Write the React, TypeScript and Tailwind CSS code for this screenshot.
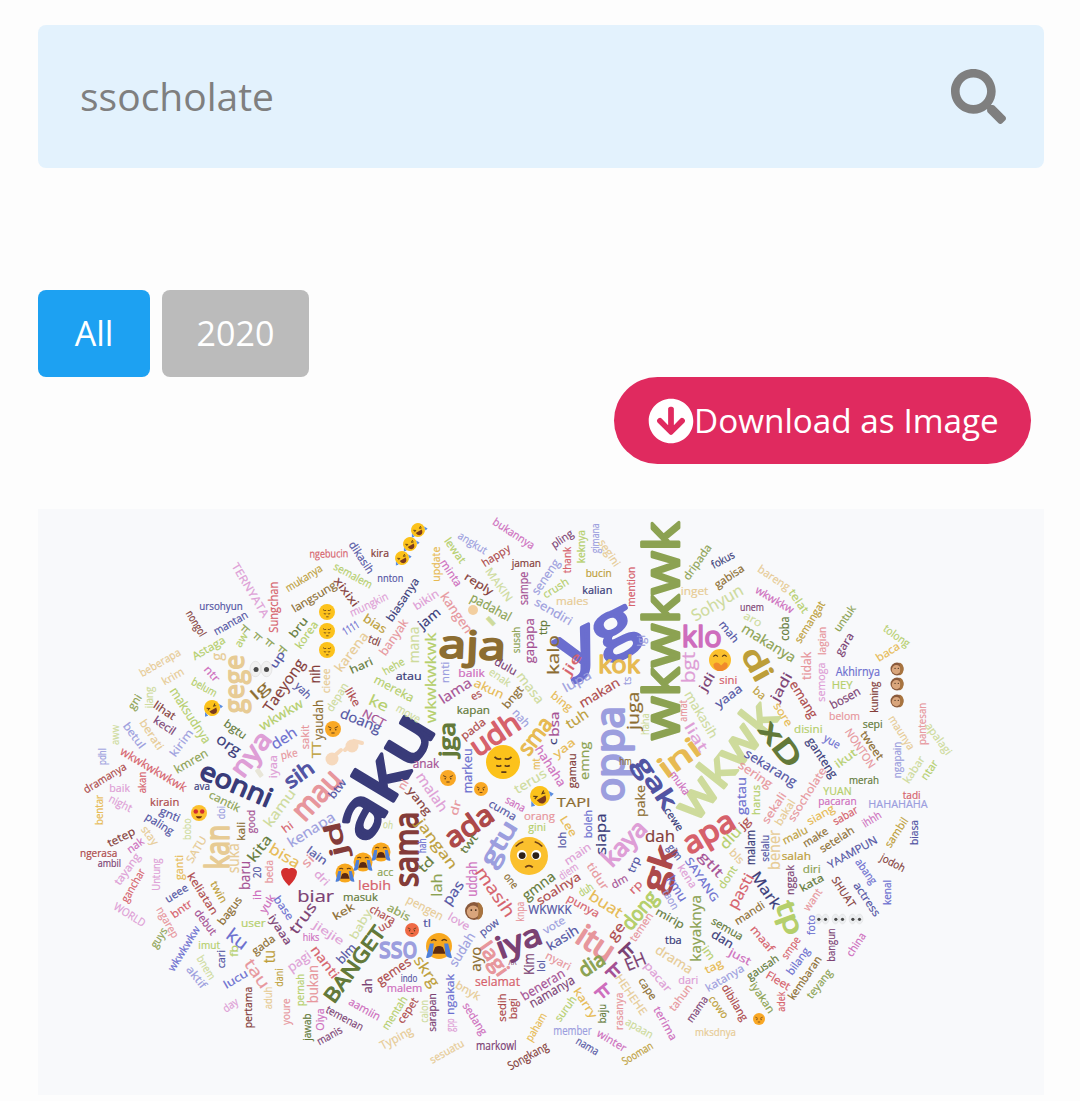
import { FaArrowCircleDown, FaSearch } from "react-icons/fa";

// d3 category20b, the palette the word cloud is drawn with
const PALETTE = [
  "#393b79", "#5254a3", "#6b6ecf", "#9c9ede", "#637939", "#8ca252", "#b5cf6b", "#cedb9c", "#8c6d31", "#bd9e39",
  "#e7ba52", "#e7cb94", "#843c39", "#ad494a", "#d6616b", "#e7969c", "#7b4173", "#a55194", "#ce6dbd", "#de9ed6",
];

// text, start x/y, end x/y, palette index, font size
type Row = [string, number, number, number, number, number, number?];

const tile = (ox: number, oy: number, rows: Row[], k = 3) =>
  rows.map(([t, x0, y0, x1, y1, c, s]) => ({
    t,
    x0: ox + x0 / k,
    y0: oy + y0 / k,
    x1: ox + x1 / k,
    y1: oy + y1 / k,
    c: PALETTE[c],
    s: s ?? 11,
  }));

const WORDS = [
  // big words and the ones that cross tiles
  ...tile(0, 0, [
    ["aku", 346, 832, 416, 716, 0, 64], ["yg", 557, 650, 630, 613, 2, 60], ["wkwkwk", 660, 740, 660, 522, 5, 50],
    ["wkwk", 682, 812, 766, 706, 7, 46], ["oppa", 608, 802, 608, 706, 3, 40], ["aja", 439, 642, 506, 645, 8, 38],
    ["gak", 641, 758, 672, 806, 1, 24], ["gk", 650, 890, 665, 846, 13, 32], ["dah", 645, 836, 675, 836, 12, 16],
    ["sama", 405, 887, 405, 812, 12, 32], ["ada", 446, 840, 490, 810, 13, 28], ["mau", 296, 815, 335, 773, 15, 30],
    ["kamu", 266, 825, 292, 790, 7, 14], ["BANGET", 328, 1000, 380, 928, 4, 20], ["aamiin", 350, 1000, 380, 1017, 18],
    ["temenan", 327, 1008, 363, 1027, 16], ["baby", 352, 938, 368, 910, 7], ["masuk", 343, 896, 378, 896, 4],
    ["lebih", 358, 885, 391, 885, 14, 13], ["doang", 341, 712, 381, 728, 1, 14], ["karena", 337, 670, 365, 633, 11, 13],
    ["hari", 350, 670, 372, 660, 4], ["dikasih", 352, 542, 372, 572, 1], ["semalem", 335, 565, 372, 585, 6],
    ["mungkin", 350, 613, 387, 595, 19], ["xixixi", 337, 578, 357, 605, 12], ["1111", 343, 632, 358, 623, 2],
    ["bru", 291, 636, 305, 618, 4], ["korea", 297, 647, 315, 622, 6], ["sekali", 764, 822, 783, 793, 15],
    ["bakal", 777, 824, 792, 800, 11], ["ssocholate", 790, 820, 823, 768, 15], ["gatau", 741, 815, 741, 777, 2, 13],
    ["harus", 755, 815, 755, 785, 6], ["bentar", 98, 825, 98, 795, 10], ["pake", 640, 817, 640, 785, 8, 12],
    ["cuma", 490, 802, 516, 817, 1], ["yang", 410, 788, 430, 813, 12], ["jangan", 420, 820, 455, 867, 9, 14],
    ["mirip", 657, 910, 684, 925, 4], ["drama", 657, 948, 692, 970, 11, 13], ["terima", 657, 1007, 675, 1039, 18],
    ["pacar", 647, 963, 670, 990, 19], ["apa", 684, 845, 732, 817, 14, 30], ["dr", 453, 815, 457, 800, 15],
    ["jga", 446, 757, 446, 722, 4, 22],
  ], 1),
  ...tile(60, 510, [
    ["ngebucin", 748, 130, 865, 128, 14], ["TERNYATA", 525, 160, 620, 318, 19], ["mukanya", 678, 235, 783, 170, 9],
    ["langsung", 697, 297, 825, 220, 8], ["Sungchan", 640, 368, 640, 215, 14, 13], ["ursohyun", 418, 285, 548, 285, 1],
    ["mantan", 462, 365, 560, 310, 1], ["nongol", 388, 303, 432, 375, 12], ["ㅠ", 545, 345, 568, 365, 5, 13],
    ["ㅠ", 583, 368, 606, 388, 5, 13], ["ㅠ", 618, 387, 642, 407, 5, 13], ["ㅠ", 656, 408, 680, 428, 5, 13],
    ["aw", 530, 408, 553, 370, 6], ["up", 635, 470, 665, 425, 1], ["Astaga", 398, 440, 492, 385, 6],
    ["beberapa", 240, 490, 358, 422, 11], ["krim", 307, 515, 368, 480, 11], ["gege", 520, 610, 520, 435, 11, 28],
    ["g", 468, 452, 468, 428, 11, 15], ["ntr", 440, 470, 475, 510, 18], ["belum", 398, 510, 470, 550, 6],
    ["lg", 575, 560, 620, 520, 8, 15], ["Taeyong", 618, 600, 722, 450, 12, 15], ["yah", 712, 520, 750, 560, 1],
    ["nih", 762, 520, 762, 465, 12, 14], ["cieee", 795, 550, 795, 475, 11], ["yaudah", 775, 690, 775, 570, 8, 12],
    ["TT", 768, 745, 768, 695, 9, 13], ["depan", 805, 600, 855, 520, 7], ["like", 865, 535, 895, 585, 13],
    ["wkwkw", 600, 650, 725, 575, 6, 13], ["deh", 635, 705, 705, 660, 2, 15], ["sakit", 733, 718, 733, 645, 15],
    ["pke", 662, 735, 712, 725, 15], ["iyaa", 637, 805, 637, 735, 19], ["nya", 525, 790, 615, 670, 19, 26],
    ["bgtu", 497, 635, 558, 678, 4], ["org", 475, 680, 540, 725, 0, 15], ["kmren", 345, 780, 440, 725, 5, 12],
    ["eonni", 425, 775, 635, 865, 0, 26], ["sih", 677, 820, 755, 765, 1, 20], ["btw", 810, 860, 850, 810, 1],
    ["maksudnya", 340, 535, 445, 695, 6, 13], ["lihat", 285, 580, 345, 620, 12], ["kecil", 285, 625, 345, 665, 16],
    ["gni", 210, 595, 235, 555, 5], ["ilang", 265, 595, 265, 530, 7], ["berati", 248, 630, 305, 715, 11],
    ["kirim", 335, 735, 390, 660, 3], ["betul", 198, 640, 250, 710, 3], ["aww", 163, 705, 163, 645, 7],
    ["pdhl", 125, 765, 125, 715, 3], ["wkwkwkwkwk", 185, 720, 378, 835, 14, 12], ["dramanya", 72, 840, 195, 765, 13],
    ["baik", 148, 832, 210, 832, 19], ["akan", 245, 850, 245, 785, 14], ["ava", 402, 825, 450, 825, 0],
    ["cantik", 450, 850, 540, 895, 5], ["kirain", 270, 875, 358, 875, 13], ["night", 150, 862, 215, 895, 19],
  ]),
  ...tile(60, 800, [
    ["gnti", 302, 28, 360, 55, 1], ["paling", 260, 45, 340, 95, 1], ["stay", 252, 80, 290, 130, 11],
    ["tetep", 143, 130, 222, 90, 12], ["nak", 203, 150, 247, 118, 18], ["bobo", 380, 120, 380, 55, 7],
    ["SATU", 385, 185, 430, 110, 11], ["kan", 470, 208, 470, 75, 11, 32], ["doi", 480, 58, 480, 18, 3],
    ["kali", 540, 122, 540, 65, 8], ["suka", 520, 220, 520, 130, 11, 16], ["good", 572, 100, 572, 30, 17],
    ["ngerasa", 60, 157, 172, 157, 13], ["ambil", 113, 187, 183, 187, 16], ["tayang", 168, 250, 232, 162, 19],
    ["ganchar", 190, 303, 245, 207, 14], ["Untung", 287, 272, 287, 175, 19], ["ganti", 355, 240, 355, 165, 10],
    ["keliatan", 392, 220, 468, 340, 13], ["twin", 462, 245, 495, 305, 9], ["ueee", 317, 298, 380, 258, 1],
    ["bntr", 335, 345, 392, 305, 14], ["ngarep", 300, 322, 350, 410, 15], ["WORLD", 165, 315, 255, 370, 19],
    ["guys", 277, 440, 312, 385, 5], ["debut", 412, 330, 465, 400, 17], ["bagus", 478, 370, 537, 292, 8],
    ["baru", 552, 270, 552, 183, 17, 15], ["kita", 570, 180, 625, 108, 4, 14], ["20", 590, 235, 590, 200, 1],
    ["beda", 625, 250, 625, 180, 15], ["bisa", 632, 140, 718, 190, 10, 15], ["hi", 668, 90, 695, 70, 14],
    ["kenapa", 685, 130, 820, 45, 3, 14], ["jd", 834, 168, 810, 69, 12, 22], ["lain", 745, 145, 800, 185, 1],
    ["si", 730, 195, 755, 170, 15, 13], ["dri", 770, 215, 805, 250, 19], ["biar", 712, 285, 822, 285, 16, 17],
    ["trus", 695, 395, 758, 310, 16, 15], ["base", 650, 290, 695, 355, 2], ["yuk", 605, 335, 635, 285, 18],
    ["ih", 590, 300, 590, 270, 18], ["iyaaa", 635, 345, 690, 430, 16], ["kek", 820, 350, 880, 315, 8],
    ["hiks", 728, 410, 778, 410, 18], ["jiejie", 765, 370, 850, 425, 19], ["blm", 835, 485, 880, 435, 1, 12],
    ["nanti", 762, 440, 830, 530, 14, 13], ["user", 543, 367, 617, 367, 6], ["ku", 507, 395, 560, 435, 2, 18],
    ["gada", 578, 455, 640, 410, 8], ["tu", 628, 490, 628, 450, 9, 16], ["imut", 415, 432, 480, 432, 6],
    ["fb", 520, 470, 520, 435, 6], ["cari", 480, 505, 480, 450, 1], ["bnem", 420, 468, 460, 535, 7],
    ["wkwkwkw", 330, 510, 410, 380, 2], ["lucu", 492, 555, 560, 515, 2], ["aktif", 388, 500, 435, 560, 3],
    ["tau", 565, 480, 620, 560, 15, 16], ["dani", 655, 560, 655, 505, 9], ["pagi", 685, 505, 748, 460, 19, 13],
    ["bukan", 758, 610, 758, 495, 15, 14], ["pernah", 718, 618, 718, 522, 6], ["day", 490, 628, 530, 600, 19],
    ["aduh", 622, 628, 622, 560, 11], ["pertama", 563, 685, 563, 560, 12], ["youre", 677, 675, 677, 595, 15],
    ["jawab", 738, 722, 738, 640, 4], ["Oiya", 778, 692, 778, 625, 18], ["manis", 772, 725, 843, 685, 16],
  ]),
  ...tile(360, 510, [
    ["kira", 32, 128, 87, 128, 12], ["biasanya", 85, 330, 168, 205, 0], ["nnton", 52, 202, 130, 202, 1],
    ["update", 225, 215, 225, 110, 10], ["lewat", 262, 85, 312, 155, 6], ["angkut", 298, 72, 380, 122, 3],
    ["bukannya", 403, 30, 522, 108, 18], ["pling", 575, 105, 635, 65, 16], ["gimana", 702, 130, 702, 40, 3],
    ["keknya", 660, 160, 660, 60, 6], ["thank", 620, 190, 620, 110, 14], ["happy", 367, 160, 447, 110, 13],
    ["jaman", 455, 158, 543, 158, 12], ["segini", 725, 90, 775, 165, 11], ["minta", 250, 150, 300, 225, 18],
    ["MAKIN", 385, 175, 452, 270, 7], ["reply", 318, 195, 398, 245, 12], ["bikin", 162, 290, 232, 245, 19],
    ["sampe", 490, 285, 490, 185, 17, 12], ["seneng", 522, 250, 590, 150, 3, 12], ["crush", 550, 255, 622, 210, 6],
    ["bucin", 677, 187, 755, 187, 9], ["mention", 812, 290, 812, 170, 14], ["kalian", 667, 238, 757, 238, 0],
    ["padahal", 335, 258, 452, 322, 5, 13], ["sendiri", 527, 272, 635, 335, 3, 12], ["males", 588, 272, 685, 272, 11],
    ["kangen", 252, 250, 330, 365, 15, 13], ["jam", 178, 348, 235, 300, 0, 13], ["bias", 14, 320, 78, 360, 9, 12],
    ["banyak", 65, 432, 135, 330, 15, 12], ["tdi", 27, 383, 62, 397, 12], ["mana", 158, 460, 158, 350, 7, 15],
    ["wkwkwkwk", 210, 640, 210, 368, 6, 14], ["I", 378, 345, 405, 320, 7, 14], ["susah", 465, 430, 465, 350, 5],
    ["gapapa", 508, 460, 508, 325, 17, 13], ["ttp", 547, 375, 547, 330, 4], ["kalo", 578, 495, 578, 375, 8, 16],
    ["jie", 615, 490, 655, 430, 14, 13], ["lgi", 840, 410, 840, 375, 3], ["kok", 715, 460, 840, 460, 10, 24],
    ["lupa", 610, 535, 690, 490, 3, 13], ["ts", 800, 525, 800, 500, 3], ["dulu", 407, 450, 470, 485, 16],
    ["nnti", 252, 520, 252, 455, 3], ["balik", 295, 488, 375, 488, 18], ["enak", 392, 480, 450, 520, 7],
    ["akun", 345, 515, 430, 555, 10, 12], ["lama", 240, 570, 330, 512, 17, 14], ["es", 333, 560, 362, 545, 13],
    ["bngt", 432, 590, 482, 530, 8], ["masa", 480, 490, 545, 575, 7, 13], ["ke", 30, 565, 85, 590, 6, 15],
    ["atau", 107, 495, 185, 495, 0], ["hehe", 70, 485, 130, 450, 6], ["mereka", 45, 505, 160, 565, 6, 12],
    ["kapan", 290, 598, 390, 598, 4], ["bing", 578, 550, 635, 595, 10], ["makan", 660, 582, 775, 512, 13, 13],
    ["juga", 820, 660, 820, 545, 8, 16], ["tuh", 620, 645, 680, 605, 9, 14], ["haha", 852, 675, 852, 610, 7],
    ["move", 112, 590, 180, 628, 7], ["NCT", 10, 605, 75, 640, 17], ["pada", 305, 680, 372, 630, 13],
    ["udh", 335, 715, 470, 625, 14, 28], ["nah", 465, 600, 505, 645, 3], ["sma", 485, 725, 560, 625, 10, 22],
    ["bsa", 582, 680, 582, 605, 17, 12], ["c", 578, 705, 578, 685, 0], ["yaa", 582, 735, 640, 690, 10],
    ["emng", 672, 810, 672, 695, 5, 13], ["gamau", 635, 835, 635, 730, 12], ["hm", 778, 752, 815, 752, 8],
    ["hahaha", 535, 710, 610, 825, 18, 12], ["mt", 525, 780, 525, 745, 10], ["terus", 465, 840, 555, 785, 7, 13],
    ["anak", 158, 760, 238, 760, 17, 12], ["markeu", 320, 850, 320, 715, 2, 13], ["malah", 180, 790, 255, 900, 19, 14],
    ["ni", 120, 835, 135, 810, 15], ["sana", 440, 865, 495, 895, 18], ["TAPI", 590, 878, 692, 878, 8, 12],
  ]),
  ...tile(360, 800, [
    ["oh", 70, 70, 100, 75, 7], ["hah", 185, 160, 185, 115, 2], ["twt", 305, 155, 345, 105, 4],
    ["td", 180, 210, 215, 175, 4, 13], ["lah", 228, 290, 228, 220, 5, 15], ["gtu", 375, 190, 450, 65, 3, 24],
    ["orang", 492, 45, 585, 45, 15], ["gini", 505, 78, 558, 78, 6], ["Lee", 610, 50, 645, 105, 10],
    ["loh", 605, 145, 605, 95, 1], ["boleh", 682, 115, 682, 30, 2], ["siapa", 722, 165, 722, 40, 0, 14],
    ["pas", 255, 310, 300, 245, 1, 14], ["uddah", 335, 290, 335, 185, 18, 14], ["masih", 360, 205, 455, 345, 14, 17],
    ["one", 440, 222, 470, 260, 8], ["gmna", 490, 290, 580, 222, 4, 14], ["main", 615, 185, 688, 135, 19],
    ["diem", 598, 230, 650, 195, 19], ["soalnya", 532, 305, 658, 225, 13, 12], ["tidur", 690, 190, 740, 265, 15],
    ["trp", 810, 215, 830, 170, 1], ["kaya", 735, 185, 845, 70, 19, 24], ["dm", 755, 255, 800, 230, 17],
    ["rp", 810, 275, 840, 245, 14], ["duh", 657, 280, 695, 255, 6], ["punya", 625, 290, 717, 342, 14],
    ["buat", 692, 280, 785, 340, 10, 15], ["dong", 795, 380, 880, 280, 6, 20], ["WKWKK", 505, 328, 635, 328, 1, 12],
    ["knpa", 478, 365, 478, 305, 15], ["pengen", 143, 295, 248, 350, 11, 12], ["chara", 33, 322, 105, 362, 13],
    ["abis", 85, 318, 150, 352, 5], ["acc", 52, 215, 100, 215, 5], ["uu", 55, 385, 90, 365, 13],
    ["tl", 190, 368, 213, 368, 1], ["love", 268, 345, 328, 380, 19], ["pow", 360, 400, 412, 360, 1],
    ["vote", 550, 392, 612, 355, 3], ["kasih", 562, 440, 652, 385, 1, 13], ["iya", 410, 445, 540, 395, 16, 30],
    ["lagi", 372, 430, 435, 520, 15, 20], ["itu", 660, 395, 760, 460, 15, 30], ["ge", 750, 415, 785, 370, 13, 14],
    ["temen", 815, 420, 870, 340, 15], ["dia", 660, 515, 728, 470, 5, 20], ["ㅠ", 778, 465, 815, 430, 16, 22],
    ["ㅠ", 738, 525, 775, 490, 17, 22], ["ㅠ", 705, 585, 745, 552, 18, 22], ["EH", 795, 495, 855, 470, 16, 18],
    ["HEHEHE", 775, 525, 855, 640, 11], ["cape", 845, 535, 885, 595, 8], ["ayo", 345, 515, 345, 440, 8, 14],
    ["sudah", 275, 495, 335, 400, 3, 13], ["sso", 57, 440, 172, 440, 3, 30], ["skrg", 175, 470, 230, 555, 9, 15],
    ["gemes", 52, 545, 148, 480, 13, 13], ["indo", 122, 533, 172, 533, 1], ["malem", 80, 562, 187, 562, 18],
    ["ah", 20, 580, 20, 535, 16, 13], ["bnyk", 290, 550, 360, 590, 11], ["selamat", 345, 545, 480, 545, 14, 12],
    ["Kim", 505, 525, 505, 460, 16, 14], ["lol", 542, 515, 542, 480, 1], ["^^", 445, 490, 470, 490, 16],
    ["nyari", 560, 462, 632, 500, 15], ["beneran", 485, 590, 610, 515, 17, 13], ["namanya", 510, 612, 640, 535, 16, 13],
    ["karry", 650, 565, 705, 650, 10], ["suruh", 590, 660, 640, 590, 6], ["baju", 725, 670, 725, 612, 4],
    ["rasanya", 775, 690, 775, 578, 15], ["apaan", 800, 660, 878, 705, 7], ["sedih", 425, 665, 425, 580, 13],
    ["bagi", 458, 658, 458, 595, 13], ["sarapan", 215, 695, 215, 580, 16], ["gpp", 268, 695, 268, 655, 19],
    ["ngakak", 268, 645, 268, 522, 2], ["calon", 190, 668, 190, 600, 7], ["cepet", 118, 665, 165, 595, 13],
    ["mentah", 72, 685, 132, 590, 6], ["sedang", 318, 610, 375, 700, 18], ["Typing", 62, 738, 155, 688, 11, 12],
    ["paham", 503, 720, 550, 640, 10], ["member", 580, 692, 695, 692, 3, 12], ["markowl", 348, 737, 470, 737, 16, 12],
    ["sesuatu", 210, 780, 308, 725, 11], ["Songkang", 445, 800, 562, 735, 12, 12], ["nama", 652, 718, 715, 755, 1],
    ["winter", 715, 695, 798, 745, 18], ["Sooman", 787, 785, 875, 732, 9],
  ]),
  ...tile(660, 510, [
    ["ini", 0, 780, 110, 700, 10, 28], ["liat", 85, 640, 135, 720, 19, 14], ["makasih", 85, 545, 165, 680, 7, 13],
    ["amat", 68, 635, 68, 570, 15], ["bgt", 85, 520, 85, 425, 19, 18], ["klo", 65, 375, 185, 375, 18, 30],
    ["jdi", 125, 540, 155, 490, 16, 12], ["sini", 178, 508, 232, 508, 14], ["yaaa", 168, 585, 242, 530, 1, 12],
    ["ba", 285, 535, 315, 560, 9], ["jadi", 340, 570, 385, 490, 16, 13], ["emang", 400, 515, 465, 620, 13, 13],
    ["sore", 350, 580, 392, 645, 10], ["tidak", 440, 510, 440, 425, 15, 12], ["makanya", 250, 350, 405, 445, 5, 14],
    ["coba", 372, 392, 372, 320, 4, 12], ["semangat", 410, 395, 485, 275, 9], ["lagian", 485, 435, 485, 350, 15],
    ["semoga", 482, 575, 482, 458, 19], ["untuk", 527, 360, 578, 288, 5], ["gara", 532, 432, 572, 370, 16],
    ["telat", 395, 240, 440, 305, 6], ["bareng", 298, 172, 388, 232, 11], ["wkwkkw", 290, 235, 400, 300, 18],
    ["unem", 240, 290, 312, 290, 16], ["aro", 255, 312, 305, 340, 7], ["Sohyun", 97, 320, 245, 235, 7, 16],
    ["mah", 185, 335, 232, 392, 1], ["inget", 62, 242, 145, 242, 11], ["gabisa", 165, 225, 248, 170, 8],
    ["dripada", 75, 205, 145, 105, 5], ["fokus", 155, 165, 220, 130, 0], ["tolong", 675, 350, 748, 402, 6],
    ["baca", 650, 445, 715, 403, 10], ["Akhirnya", 527, 485, 660, 485, 2, 12], ["HEY", 515, 522, 578, 522, 6],
    ["kuning", 640, 608, 640, 515, 12], ["bosen", 512, 587, 598, 540, 16, 12], ["belom", 507, 616, 600, 616, 15],
    ["sepi", 608, 641, 668, 641, 4], ["disini", 402, 655, 488, 655, 6], ["yue", 495, 680, 540, 705, 2],
    ["NONTON", 565, 658, 640, 770, 15], ["tweet", 610, 665, 665, 745, 8], ["ganteng", 450, 685, 525, 800, 0, 12],
    ["ikut", 527, 765, 585, 722, 6], ["maunya", 695, 618, 758, 715, 11], ["pantesan", 783, 705, 783, 578, 15],
    ["apalagi", 805, 640, 870, 730, 7], ["ngapain", 708, 805, 708, 695, 3], ["kabar", 735, 815, 785, 740, 7],
    ["ntar", 788, 805, 825, 752, 6], ["merah", 567, 808, 657, 808, 4], ["sekarang", 258, 725, 408, 818, 1, 13],
    ["sering", 240, 760, 335, 825, 15, 12], ["YUAN", 490, 840, 575, 840, 6], ["pacaran", 475, 870, 590, 870, 18],
    ["HAHAHAHA", 625, 880, 803, 880, 3], ["tadi", 728, 852, 782, 852, 14], ["di", 270, 415, 320, 505, 9, 28],
    ["xD", 320, 640, 410, 760, 4, 28], ["muka", 38, 785, 85, 850, 18],
  ]),
  ...tile(660, 800, [
    ["siang", 442, 65, 520, 20, 10], ["sabar", 520, 65, 590, 25, 14], ["ihhh", 608, 72, 660, 40, 18],
    ["sambil", 680, 138, 735, 55, 9], ["biasa", 760, 135, 760, 60, 1], ["malu", 368, 122, 440, 85, 9],
    ["make", 430, 132, 500, 88, 8], ["setelah", 480, 148, 578, 85, 8], ["salah", 365, 167, 453, 167, 9],
    ["YAAMPUN", 505, 195, 648, 115, 1], ["jodoh", 665, 168, 735, 205, 12], ["bener", 343, 210, 343, 90, 11, 16],
    ["selalu", 312, 185, 312, 105, 1], ["malam", 270, 195, 270, 90, 0, 12], ["diri", 428, 205, 482, 205, 5],
    ["abang", 595, 178, 645, 248, 2], ["nggak", 388, 285, 388, 195, 16], ["kata", 420, 265, 488, 228, 4],
    ["SHUAT", 525, 232, 580, 318, 12], ["actress", 590, 248, 655, 345, 1], ["kenal", 680, 315, 680, 240, 2],
    ["want", 435, 328, 477, 268, 15], ["foto", 452, 405, 452, 345, 2], ["bangun", 512, 485, 512, 385, 16],
    ["china", 565, 465, 608, 400, 18], ["Mark", 285, 218, 355, 320, 0, 15], ["pasti", 212, 322, 268, 222, 14, 15],
    ["dont", 180, 262, 222, 200, 6], ["bls", 215, 150, 248, 185, 11], ["dlu", 185, 140, 235, 85, 6, 14],
    ["jg", 240, 80, 265, 55, 13], ["gtlt", 125, 160, 185, 225, 17, 13], ["kmu", 30, 230, 75, 300, 2, 13],
    ["kena", 62, 195, 105, 260, 19], ["SAYANG", 85, 175, 170, 300, 2], ["cewe", 22, 25, 65, 88, 0],
    ["gim", 30, 135, 62, 175, 1], ["taon", 18, 270, 50, 325, 3], ["kayaknya", 105, 485, 105, 285, 5, 15],
    ["semua", 158, 358, 248, 410, 4], ["mandi", 225, 365, 310, 310, 8], ["dan", 158, 398, 218, 435, 0, 12],
    ["maaf", 280, 380, 338, 450, 14], ["smpe", 370, 472, 412, 412, 14], ["bilang", 385, 520, 440, 445, 2],
    ["im", 135, 440, 160, 475, 6], ["tba", 15, 418, 65, 418, 0], ["tag", 135, 510, 185, 485, 10],
    ["just", 210, 452, 272, 485, 18], ["gausah", 262, 530, 352, 470, 4], ["katanya", 138, 565, 248, 500, 3],
    ["dari", 55, 538, 115, 538, 19], ["tahun", 32, 628, 88, 555, 15], ["kembaran", 390, 595, 475, 470, 8],
    ["Fleet", 322, 520, 390, 560, 14], ["teyang", 445, 590, 508, 510, 5], ["iyakan", 280, 548, 338, 635, 5],
    ["adek", 362, 635, 362, 575, 14], ["dibilang", 195, 555, 258, 658, 13], ["mama", 85, 662, 135, 590, 16],
    ["cowo", 155, 590, 200, 650, 9], ["mksdnya", 105, 695, 228, 695, 11], ["tp", 375, 305, 410, 400, 6, 26],
  ]),
];

type EmojiProps = { x: number; y: number; r: number };

function Pensive({ x, y, r }: EmojiProps) {
  return (
    <g transform={`translate(${x} ${y}) scale(${r / 10})`}>
      <circle r="10" fill="#fcc21b" />
      <path d="M-5-3q2 2 4 1M5-3q-2 2-4 1M-4 2q2 1 3 0M4 2q-2 1-3 0M-1 6h3" stroke="#5b3a1a" strokeWidth="1" fill="none" />
    </g>
  );
}

function Rofl({ x, y, r }: EmojiProps) {
  return (
    <g transform={`translate(${x} ${y}) rotate(-30) scale(${r / 10})`}>
      <circle r="10" fill="#fcc21b" />
      <path d="M-6-3l3 2-3 1M6-3l-3 2 3 1" stroke="#5b3a1a" strokeWidth="1.2" fill="none" />
      <path d="M-5 2h10q-1 6-5 6t-5-6" fill="#7a3b1e" />
      <path d="M-10 0l-3 5 4 1zM10 0l3 5-4 1z" fill="#5b8de0" />
    </g>
  );
}

function Crying({ x, y, r }: EmojiProps) {
  return (
    <g transform={`translate(${x} ${y}) scale(${r / 10})`}>
      <circle r="10" fill="#f8a81e" />
      <path d="M-6-4q2-2 4 0M2-4q2-2 4 0" stroke="#5b3a1a" strokeWidth="1.1" fill="none" />
      <path d="M-3 1q3-2 6 0l2 5h-10z" fill="#5b2a12" />
      <path d="M-7-2h3l-1 9q-2 3-5 2zM7-2h-3l1 9q2 3 5 2z" fill="#4f80d8" />
    </g>
  );
}

function Pleading({ x, y, r }: EmojiProps) {
  return (
    <g transform={`translate(${x} ${y}) scale(${r / 10})`}>
      <circle r="10" fill="#fbc02d" />
      <circle cx="-3.8" cy="-0.5" r="2.6" fill="#fff" />
      <circle cx="3.8" cy="-0.5" r="2.6" fill="#fff" />
      <circle cx="-3.6" cy="-0.2" r="1.8" fill="#2d2018" />
      <circle cx="3.6" cy="-0.2" r="1.8" fill="#2d2018" />
      <path d="M-7-5q2-2 4-2.5M7-5q-2-2-4-2.5M-2 6q2-2 4 0" stroke="#6b3f16" strokeWidth="0.9" fill="none" />
    </g>
  );
}

function Sulky({ x, y, r, fill = "#f9a825" }: EmojiProps & { fill?: string }) {
  return (
    <g transform={`translate(${x} ${y}) scale(${r / 10})`}>
      <circle r="10" fill={fill} />
      <path d="M-6-3l4 2M6-3l-4 2M-2 5h4" stroke="#5b3a1a" strokeWidth="1.2" fill="none" />
      <circle cx="-3.5" cy="1" r="1" fill="#5b3a1a" />
      <circle cx="3.5" cy="1" r="1" fill="#5b3a1a" />
    </g>
  );
}

function Hearts({ x, y, r }: EmojiProps) {
  return (
    <g transform={`translate(${x} ${y}) scale(${r / 10})`}>
      <circle r="10" fill="#fbc02d" />
      <circle cx="-4" cy="-2" r="2.8" fill="#d32f2f" />
      <circle cx="4" cy="-2" r="2.8" fill="#d32f2f" />
      <path d="M-4 4h8q-1 3-4 3t-4-3" fill="#6b2c14" />
    </g>
  );
}

function Hug({ x, y, r }: EmojiProps) {
  return (
    <g transform={`translate(${x} ${y}) scale(${r / 10})`}>
      <circle r="10" fill="#fbc02d" />
      <path d="M-6-3q2-3 4 0M2-3q2-3 4 0" stroke="#5b3a1a" strokeWidth="1.1" fill="none" />
      <path d="M-6 4q2-3 5-1l2 2 3-3q3 0 3 3t-5 5h-4q-4-2-4-6" fill="#f08a2c" />
    </g>
  );
}

function Monkey({ x, y, r }: EmojiProps) {
  return (
    <g transform={`translate(${x} ${y}) scale(${r / 10})`}>
      <circle r="10" fill="#8a5a3c" />
      <ellipse cx="-1" cy="1" rx="7" ry="7" fill="#d9a57c" />
      <path d="M4-10q6 2 6 10t-6 10q2-10 0-20" fill="#a8743f" />
      <circle cx="-3" cy="-1" r="1" fill="#3e2a1a" />
      <circle cx="2" cy="-1" r="1" fill="#3e2a1a" />
    </g>
  );
}

function Eyes({ x, y, r, pale = false }: EmojiProps & { pale?: boolean }) {
  return (
    <g transform={`translate(${x} ${y}) scale(${r / 10})`}>
      <ellipse cx="-5" rx="5" ry="7" fill={pale ? "#eceef0" : "#f1f1f1"} stroke="#dadada" strokeWidth="0.6" />
      <ellipse cx="5" rx="5" ry="7" fill={pale ? "#eceef0" : "#f1f1f1"} stroke="#dadada" strokeWidth="0.6" />
      <circle cx="-4.5" cy="0.5" r="2.3" fill="#4a4a4a" />
      <circle cx="5" cy="0.5" r="2.3" fill="#4a4a4a" />
    </g>
  );
}

function WordCloud() {
  return (
    <svg viewBox="38 509 1006 586" className="block h-[586px] w-[1006px]">
      {WORDS.map((w, i) => {
        const dx = w.x1 - w.x0;
        const dy = w.y1 - w.y0;
        const angle = (Math.atan2(dy, dx) * 180) / Math.PI;
        const len = Math.hypot(dx, dy);
        return (
          <text
            key={i}
            transform={`translate(${w.x0} ${w.y0}) rotate(${angle})`}
            dominantBaseline="central"
            textLength={len}
            lengthAdjust="spacingAndGlyphs"
            fontSize={w.s}
            fill={w.c}
            stroke={w.c}
            strokeWidth={w.s >= 20 ? w.s * 0.055 : 0.2}
            strokeLinejoin="round"
          >
            {w.t}
          </text>
        );
      })}
      <Pensive x={327} y={612} r={8} />
      <Pensive x={327} y={631} r={8} />
      <Pensive x={327} y={650} r={8} />
      <Pensive x={503} y={762} r={17} />
      <Eyes x={261} y={669} r={11} />
      <Rofl x={212} y={708} r={8} />
      <Rofl x={540} y={796} r={10} />
      <Rofl x={402} y={558} r={7} />
      <Rofl x={410} y={544} r={7} />
      <Rofl x={418} y={530} r={7} />
      <Sulky x={333} y={729} r={8} />
      <Sulky x={448} y={778} r={8} />
      <Sulky x={481} y={789} r={7} />
      <Sulky x={412} y={930} r={7} fill="#ef6a45" />
      <Sulky x={759} y={1019} r={6} />
      <circle cx="332" cy="759" r="6.5" fill="#f6d9bd" />
      <path d="M333 757L341 750" stroke="#f6d9bd" strokeWidth="4" strokeLinecap="round" />
      <circle cx="352" cy="746" r="6.5" fill="#f6d9bd" />
      <path d="M345 750L354 741L362 743" stroke="#f6d9bd" strokeWidth="4" strokeLinecap="round" fill="none" />
      <rect x="257" y="768" width="5" height="9" rx="1" transform="rotate(-35 260 773)" fill="#e8e6d8" />
      <path d="M281 872a5 5 0 0 1 8-3 5 5 0 0 1 8 3q0 6-8 14-8-8-8-14" fill="#d32f2f" />
      <Hearts x={199} y={813} r={8} />
      <Crying x={345} y={873} r={9.5} />
      <Crying x={363} y={862} r={9.5} />
      <Crying x={381} y={852} r={9.5} />
      <Crying x={439} y={946} r={13} />
      <Monkey x={474} y={911} r={9} />
      <Pleading x={529} y={856} r={19} />
      <Hug x={720} y={660} r={11} />
      <Monkey x={897} y={669} r={6.5} />
      <Monkey x={897} y={684} r={6.5} />
      <Monkey x={897} y={701} r={6.5} />
      <Eyes x={822} y={919} r={7} pale />
      <Eyes x={839} y={919} r={7} pale />
      <Eyes x={856} y={919} r={7} pale />
      <circle cx="473" cy="610" r="5" fill="#f3cfa0" />
    </svg>
  );
}

export default function App() {
  return (
    <div className="min-h-[1101px] w-[1080px] bg-[#fdfdfd] pl-[38px] pr-[36px] pt-[25px] [font-family:'Open_Sans',sans-serif]">
      <div className="flex h-[143px] items-center justify-between rounded-lg bg-[#e3f2fd] pl-[42px] pr-[38px]">
        <span className="text-[39px] text-[#7f7f7f]">ssocholate</span>
        <FaSearch className="h-[55px] w-[55px] text-[#7f7f7f]" />
      </div>

      <div className="mt-[122px] flex gap-3 text-[34px] text-white">
        <div className="flex h-[87px] w-[112px] items-center justify-center rounded-lg bg-[#1da1f2]">All</div>
        <div className="flex h-[87px] w-[147px] items-center justify-center rounded-lg bg-[#bbbbbb]">2020</div>
      </div>

      <div className="flex justify-end pr-[13px]">
        <div className="flex h-[87px] w-[417px] items-center rounded-full bg-[#e02a5f] pl-[34px] text-[33.3px] text-white">
          <FaArrowCircleDown className="h-[46px] w-[46px]" />
          <span>Download as Image</span>
        </div>
      </div>

      <div className="mt-[45px] h-[586px] bg-[#f8f9fb] [font-family:'Open_Sans','Noto_Sans_CJK_KR',sans-serif]">
        <WordCloud />
      </div>
    </div>
  );
}
